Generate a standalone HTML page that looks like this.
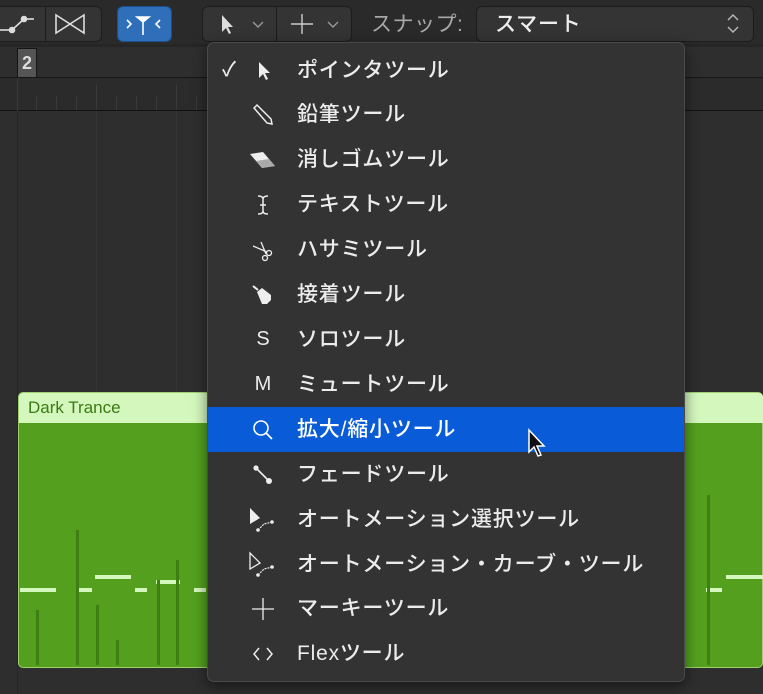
<!DOCTYPE html>
<html><head><meta charset="utf-8"><style>
body{margin:0;width:763px;height:694px;background:#262626;position:relative;overflow:hidden;font-family:"Liberation Sans","Noto Sans CJK JP",sans-serif}
.a{position:absolute}
.btn{position:absolute;background:#343434;border:1px solid #1c1c1c;border-radius:6px;box-sizing:border-box}
.menu{position:absolute;left:207px;top:42px;width:478px;height:640px;background:#333333;border:1px solid #4a4a4a;border-radius:7px;box-sizing:border-box;box-shadow:0 4px 14px rgba(0,0,0,.5)}
.it{position:absolute;left:0;width:476px;height:45px;color:#ececec;font-size:21px;line-height:45px;letter-spacing:0.8px;font-weight:500}
.it .t{position:absolute;left:89px;top:0}
.it .i{position:absolute;left:40px;top:0;width:30px;height:45px;display:flex;align-items:center;justify-content:center;font-size:20px;letter-spacing:0}
.vl{position:absolute;width:1px;background:#3a3a3a}
</style></head><body>
<!-- toolbar -->
<div class="a" style="left:0;top:0;width:763px;height:44px;background:#2a2a2a"></div>
<div class="btn" style="left:-6px;top:6px;width:108px;height:36px"></div>
<div class="a" style="left:45px;top:7px;width:1px;height:34px;background:#1c1c1c"></div>
<svg class="a" style="left:0;top:8px" width="100" height="32"><g stroke="#ddd" stroke-width="1.6" fill="#ddd"><line x1="0" y1="22" x2="12" y2="22"/><line x1="12" y1="22" x2="24" y2="11"/><line x1="24" y1="11" x2="34" y2="11"/><circle cx="12" cy="22" r="2.5"/><circle cx="24" cy="11" r="2.5"/><path d="M56 7 L70 16 L56 25 Z M84 7 L70 16 L84 25 Z" fill="none"/></g></svg>
<div class="btn" style="left:117px;top:6px;width:55px;height:36px;background:#2f6fba;border-color:#1f4f8a"></div>
<svg class="a" style="left:117px;top:6px" width="55" height="36"><g stroke="#fff" stroke-width="1.6" fill="none"><path d="M10 14 L14 18 L10 22"/><path d="M43 14 L39 18 L43 22"/><path d="M20 11 L32 11 L26 16 Z" fill="#fff"/><line x1="26" y1="16" x2="26" y2="29"/></g></svg>
<div class="btn" style="left:202px;top:6px;width:150px;height:36px"></div>
<div class="a" style="left:276px;top:7px;width:1px;height:34px;background:#1c1c1c"></div>
<svg class="a" style="left:202px;top:6px" width="150" height="36"><path d="M20 9 L20 26 L24 22 L27 28 L29 27 L26 21 L31 21 Z" fill="#ddd"/><path d="M51 16 L56 21 L61 16" stroke="#999" stroke-width="1.4" fill="none"/><g stroke="#ccc" stroke-width="1.4"><line x1="89" y1="18" x2="111" y2="18"/><line x1="100" y1="8" x2="100" y2="28"/></g><path d="M126 16 L131 21 L136 16" stroke="#999" stroke-width="1.4" fill="none"/></svg>
<div class="a" style="left:371px;top:8px;color:#a8a8a8;font-size:21px;letter-spacing:0.5px">スナップ:</div>
<div class="btn" style="left:476px;top:6px;width:278px;height:36px"></div>
<div class="a" style="left:495px;top:8px;color:#eee;font-size:21px;letter-spacing:0.8px;font-weight:500">スマート</div>
<svg class="a" style="left:725px;top:12px" width="16" height="24"><path d="M3 8 L8 3 L13 8 M3 15 L8 20 L13 15" stroke="#bbb" stroke-width="1.4" fill="none"/></svg>
<!-- ruler -->
<div class="a" style="left:0;top:47px;width:763px;height:30px;background:#2e2e2e;border-bottom:1px solid #151515"></div>
<div class="a" style="left:17px;top:48px;width:20px;height:30px;background:#555;border:1px solid #151515;box-sizing:border-box;color:#ddd;font-size:18px;font-weight:bold;text-align:center;line-height:28px">2</div>
<div class="a" style="left:0;top:78px;width:763px;height:32px;background:#2b2b2b;border-bottom:1px solid #111"></div>
<div class="vl" style="left:36px;top:96px;height:14px"></div>
<div class="vl" style="left:56px;top:96px;height:14px"></div>
<div class="vl" style="left:76px;top:96px;height:14px"></div>
<div class="vl" style="left:96px;top:85px;height:25px"></div>
<div class="vl" style="left:116px;top:96px;height:14px"></div>
<div class="vl" style="left:136px;top:96px;height:14px"></div>
<div class="vl" style="left:156px;top:96px;height:14px"></div>
<div class="vl" style="left:176px;top:85px;height:25px"></div>
<div class="vl" style="left:196px;top:96px;height:14px"></div>
<div class="vl" style="left:17px;top:78px;height:616px"></div>
<!-- track area -->
<div class="a" style="left:0;top:111px;width:763px;height:583px;background:#2e2e2e"></div>
<div class="vl" style="left:17px;top:111px;height:583px;background:#262626"></div>
<div class="vl" style="left:96px;top:111px;height:280px;background:#363636"></div>
<div class="vl" style="left:176px;top:111px;height:280px;background:#363636"></div>
<div class="a" style="left:18px;top:392px;width:745px;height:276px;background:#54a01e;border:1px solid #9ed070;border-radius:5px;box-sizing:border-box"></div>
<div class="a" style="left:19px;top:393px;width:744px;height:30px;background:#d3f7bd;border-radius:4px 4px 0 0"></div>
<div class="a" style="left:28px;top:398px;color:#3b7a14;font-size:17px">Dark Trance</div>
<div class="a" style="left:20px;top:588px;width:36px;height:4px;background:#d3f7bd"></div>
<div class="a" style="left:76px;top:588px;width:16px;height:4px;background:#d3f7bd"></div>
<div class="a" style="left:95px;top:575px;width:36px;height:4px;background:#d3f7bd"></div>
<div class="a" style="left:135px;top:588px;width:12px;height:4px;background:#d3f7bd"></div>
<div class="a" style="left:156px;top:580px;width:24px;height:4px;background:#d3f7bd"></div>
<div class="a" style="left:194px;top:588px;width:12px;height:4px;background:#d3f7bd"></div>
<div class="a" style="left:706px;top:588px;width:16px;height:4px;background:#d3f7bd"></div>
<div class="a" style="left:726px;top:575px;width:37px;height:4px;background:#d3f7bd"></div>
<div class="a" style="left:36px;top:610px;width:3px;height:55px;background:#3e7e14"></div>
<div class="a" style="left:76px;top:530px;width:3px;height:135px;background:#3e7e14"></div>
<div class="a" style="left:96px;top:605px;width:3px;height:60px;background:#3e7e14"></div>
<div class="a" style="left:116px;top:640px;width:3px;height:25px;background:#3e7e14"></div>
<div class="a" style="left:157px;top:580px;width:3px;height:85px;background:#3e7e14"></div>
<div class="a" style="left:176px;top:560px;width:3px;height:105px;background:#3e7e14"></div>
<div class="a" style="left:707px;top:495px;width:3px;height:170px;background:#3e7e14"></div>
<!-- menu -->
<div class="menu">
<div class="it" style="top:5px"><span class="a" style="left:14px;font-size:20px">✓</span><span class="i"><svg width="20" height="22"><path d="M6 2 L6 18 L10 14 L13 20 L15 19 L12 13 L17 13 Z" fill="#eee"/></svg></span><span class="t">ポインタツール</span></div>
<div class="it" style="top:49px"><span class="i"><svg width="24" height="24"><path d="M3 5 L6 2 L20 16 L21 21 L16 20 Z" fill="none" stroke="#eee" stroke-width="1.5"/></svg></span><span class="t">鉛筆ツール</span></div>
<div class="it" style="top:94px"><span class="i"><svg width="28" height="20"><path d="M1 4 L14 2 L26 16 L13 18 Z" fill="#eee"/><path d="M7 11 L20 9 L26 16 L13 18 Z" fill="#aaa"/></svg></span><span class="t">消しゴムツール</span></div>
<div class="it" style="top:139px"><span class="i"><svg width="16" height="24"><path d="M3 3 Q8 3 8 6 L8 18 Q8 21 3 21 M13 3 Q8 3 8 6 M8 18 Q8 21 13 21 M5 12 L11 12" stroke="#eee" stroke-width="1.5" fill="none"/></svg></span><span class="t">テキストツール</span></div>
<div class="it" style="top:184px"><span class="i"><svg width="24" height="24"><path d="M2 8 L16 14 M10 4 L15 16" stroke="#eee" stroke-width="1.3"/><circle cx="18" cy="15" r="2.5" fill="none" stroke="#eee" stroke-width="1.3"/><circle cx="14" cy="20" r="2.5" fill="none" stroke="#eee" stroke-width="1.3"/></svg></span><span class="t">ハサミツール</span></div>
<div class="it" style="top:229px"><span class="i"><svg width="24" height="24"><path d="M2 3 L7 7" stroke="#eee" stroke-width="2"/><path d="M6 9 L11 5 L20 12 L20 17 L16 21 L11 21 Z" fill="#eee"/></svg></span><span class="t">接着ツール</span></div>
<div class="it" style="top:274px"><span class="i">S</span><span class="t">ソロツール</span></div>
<div class="it" style="top:319px"><span class="i">M</span><span class="t">ミュートツール</span></div>
<div class="it" style="top:364px;background:#0a5bd8;color:#fff"><span class="i"><svg width="24" height="24"><circle cx="10" cy="10" r="7" fill="none" stroke="#fff" stroke-width="1.6"/><path d="M15 15 L21 21" stroke="#fff" stroke-width="1.8"/></svg></span><span class="t">拡大/縮小ツール</span></div>
<div class="it" style="top:409px"><span class="i"><svg width="24" height="24"><circle cx="5" cy="5" r="2.6" fill="#eee"/><circle cx="18" cy="18" r="3" fill="#eee"/><path d="M5 5 L18 18" stroke="#eee" stroke-width="1.6"/></svg></span><span class="t">フェードツール</span></div>
<div class="it" style="top:454px"><span class="i"><svg width="32" height="28"><path d="M2 2 L2 18 L12 12 Z" fill="#eee"/><path d="M10 24 L16 18 L24 16" stroke="#eee" stroke-width="1.2" fill="none" stroke-dasharray="2 1"/><circle cx="10" cy="24" r="1.8" fill="#eee"/><circle cx="24" cy="16" r="1.8" fill="#eee"/></svg></span><span class="t">オートメーション選択ツール</span></div>
<div class="it" style="top:499px"><span class="i"><svg width="32" height="28"><path d="M2 2 L2 18 L12 12 Z" fill="none" stroke="#eee" stroke-width="1.3"/><path d="M10 24 L16 18 L24 16" stroke="#eee" stroke-width="1.2" fill="none" stroke-dasharray="2 1"/><circle cx="10" cy="24" r="1.8" fill="#eee"/><circle cx="24" cy="16" r="1.8" fill="#eee"/></svg></span><span class="t">オートメーション・カーブ・ツール</span></div>
<div class="it" style="top:543px"><span class="i"><svg width="24" height="24"><path d="M1 12 L23 12 M12 1 L12 23" stroke="#eee" stroke-width="1.3"/></svg></span><span class="t">マーキーツール</span></div>
<div class="it" style="top:588px"><span class="i"><svg width="24" height="24"><path d="M8 6 L3 12 L8 18 M16 6 L21 12 L16 18" stroke="#eee" stroke-width="1.5" fill="none"/></svg></span><span class="t">Flexツール</span></div>
</div>
<svg class="a" style="left:527px;top:428px" width="24" height="32"><path d="M2 2 L2 24 L7 19 L11 28 L14 27 L10 18 L17 18 Z" fill="#111" stroke="#fff" stroke-width="1.5"/></svg>
</body></html>
